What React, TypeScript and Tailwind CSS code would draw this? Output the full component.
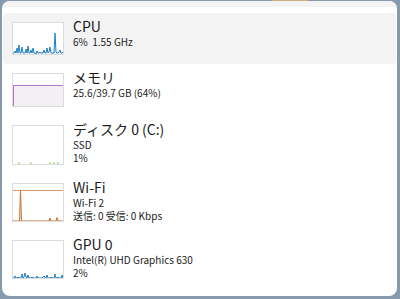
import React from "react";

const W = 50;

function CpuChart() {
  const ys = [30,30,28,30,25,30,22,30,30,24,30,30,30,26,30,23,30,30,27,30,25,30,30,31,28,30,30,29,30,30,30,27,30,30,25,30,29,24,30,30,30,30,10,29,30,30,29,27,30,30,29];
  const pts = ys.map((y, i) => `${(i * W) / (ys.length - 1)},${y}`).join(" ");
  return (
    <svg viewBox={`0 0 ${W} 31`} preserveAspectRatio="none" className="w-full h-full block">
      <polygon points={`0,31 ${pts} ${W},31`} fill="#eef5fb" />
      <polyline points={pts} fill="none" stroke="#1e7fc4" strokeWidth="1" />
    </svg>
  );
}

function MemChart() {
  return (
    <svg viewBox="0 0 50 32" preserveAspectRatio="none" className="w-full h-full block">
      <rect x="0" y="11.5" width="50" height="21" fill="#f3f0f5" />
      <line x1="0" y1="11.5" x2="50" y2="11.5" stroke="#bb74d4" strokeWidth="1" />
      <line x1="0.5" y1="11.5" x2="0.5" y2="32" stroke="#bb74d4" strokeWidth="1" />
    </svg>
  );
}

function DiskChart() {
  const xs = [5, 17, 36, 40, 44];
  return (
    <svg viewBox="0 0 50 38" preserveAspectRatio="none" className="w-full h-full block">
      {xs.map((x) => (
        <rect key={x} x={x} y="36.5" width="1.5" height="1.5" fill="#9ccc65" />
      ))}
    </svg>
  );
}

function WifiChart() {
  return (
    <svg viewBox="0 0 50 37" preserveAspectRatio="none" className="w-full h-full block">
      <line x1="0" y1="6.5" x2="50" y2="6.5" stroke="#d99a6a" strokeWidth="1" />
      <polyline points="0,37 6.5,37 7.5,6.5 8.5,37 36,37 37,34 38,37 43,37 44,33.5 45,37 50,37" fill="#f8e6d8" stroke="#c9702e" strokeWidth="1" />
    </svg>
  );
}

function GpuChart() {
  const ys = [37,37,35,37,37,36,37,37,37,33,37,36,32,36,37,34,37,37,37,36,37,37,37,37,35,37,37,37,37,37,36,35,37,37,34,37,37,37,36,37,37,37,33,37,37,36,37,37,37,34,37];
  const pts = ys.map((y, i) => `${(i * W) / (ys.length - 1)},${y}`).join(" ");
  return (
    <svg viewBox="0 0 50 37" preserveAspectRatio="none" className="w-full h-full block">
      <polygon points={`0,37 ${pts} 50,37`} fill="#eef5fb" />
      <polyline points={pts} fill="none" stroke="#1e7fc4" strokeWidth="1" />
    </svg>
  );
}

type Row = {
  title: string;
  lines: string[];
  h: string;
  chart: React.ReactNode;
  selected?: boolean;
};

const rows: Row[] = [
  { title: "CPU", lines: ["6%\u00a0\u00a01.55 GHz"], h: "h-[33px]", chart: <CpuChart />, selected: true },
  { title: "メモリ", lines: ["25.6/39.7 GB (64%)"], h: "h-[34px]", chart: <MemChart /> },
  { title: "ディスク 0 (C:)", lines: ["SSD", "1%"], h: "h-[40px]", chart: <DiskChart /> },
  { title: "Wi-Fi", lines: ["Wi-Fi 2", "送信: 0 受信: 0 Kbps"], h: "h-[39px]", chart: <WifiChart /> },
  { title: "GPU 0", lines: ["Intel(R) UHD Graphics 630", "2%"], h: "h-[39px]", chart: <GpuChart /> },
];

export default function App() {
  return (
    <div
      className="w-[400px] h-[299px] bg-[#8699ad] relative overflow-hidden"
      style={{ fontFamily: '"Noto Sans CJK JP", sans-serif' }}
    >
      <div className="absolute top-0 left-[272px] w-[36px] h-[1px] bg-[#c9b37c]" />
      <div className="absolute top-[1px] left-[2px] right-[3px] bottom-[3px] bg-white rounded-[8px] overflow-hidden flex flex-col">
        <div className="h-[6px] bg-[#f3f3f3] shrink-0" />
        <div className="h-[6px] shrink-0" />
        <div className="flex flex-col px-[1px]">
          {rows.map((r) => (
            <div
              key={r.title}
              className={`flex items-start gap-[9px] px-[9px] py-[9px] rounded-[4px] ${r.selected ? "bg-[#f3f3f3]" : ""}`}
            >
              <div className={`w-[52px] ${r.h} border border-[#dcdcdc] bg-white shrink-0`}>{r.chart}</div>
              <div className="flex flex-col -mt-[5px] text-[#1b1b1b]">
                <div className="text-[14px] leading-[18px]">{r.title}</div>
                {r.lines.map((l) => (
                  <div key={l} className="text-[10px] leading-[13px] whitespace-nowrap">{l}</div>
                ))}
              </div>
            </div>
          ))}
        </div>
      </div>
    </div>
  );
}
